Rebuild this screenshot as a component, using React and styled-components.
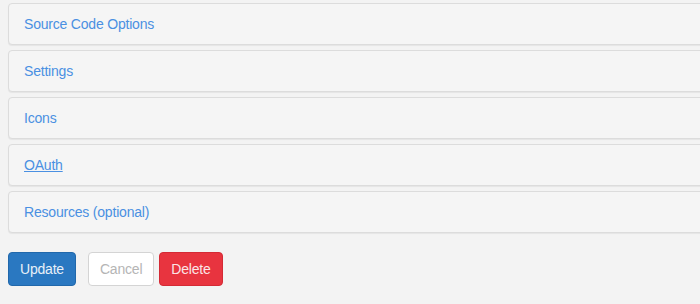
import React from "react";
import styled, { createGlobalStyle } from "styled-components";

const GlobalStyles = createGlobalStyle`
  html, body {
    margin: 0;
    padding: 0;
    overflow: hidden;
    background-color: #f3f3f3;
    font-family: "Liberation Sans", Arial, sans-serif;
    font-size: 14px;
  }
`;

const Page = styled.div`
  padding: 3px 0 0 8px;
`;

const PanelGroup = styled.div`
  display: flex;
  flex-direction: column;
  gap: 5px;
  width: 740px;
`;

const Panel = styled.div`
  background-color: #f5f5f5;
  border: 1px solid #dcdcdc;
  border-radius: 4px;
  box-shadow: 0 1px 1px rgba(0, 0, 0, 0.06);
`;

const PanelHeading = styled.div`
  padding: 10px 15px;
  line-height: 20px;
`;

const PanelLink = styled.a`
  color: #4a90e2;
  font-size: 14px;
  letter-spacing: -0.2px;
  text-decoration: ${(p) => (p.$active ? "underline" : "none")};
  cursor: pointer;
`;

const Actions = styled.div`
  display: flex;
  align-items: center;
  margin-top: 19px;
`;

const Button = styled.button`
  font-family: "Liberation Sans", Arial, sans-serif;
  font-size: 14px;
  letter-spacing: -0.2px;
  line-height: 20px;
  padding: 6px 11px;
  border-radius: 4px;
  border: 1px solid ${(p) => p.$border};
  background-color: ${(p) => p.$bg};
  color: ${(p) => p.$color};
  margin-right: ${(p) => p.$gap || 0}px;
  cursor: pointer;
`;

const sections = [
  { label: "Source Code Options" },
  { label: "Settings" },
  { label: "Icons" },
  { label: "OAuth", active: true },
  { label: "Resources (optional)" },
];

const App = () => {
  return (
    <Page>
      <GlobalStyles />
      <PanelGroup>
        {sections.map((s) => (
          <Panel key={s.label}>
            <PanelHeading>
              <PanelLink $active={s.active}>{s.label}</PanelLink>
            </PanelHeading>
          </Panel>
        ))}
      </PanelGroup>
      <Actions>
        <Button $bg="#2a78c1" $border="#2168ab" $color="#e8f0f8" $gap={12}>
          Update
        </Button>
        <Button $bg="#ffffff" $border="#d4d4d4" $color="#b5b5b5" $gap={5}>
          Cancel
        </Button>
        <Button $bg="#e8343f" $border="#d42a35" $color="#fbe4e6">
          Delete
        </Button>
      </Actions>
    </Page>
  );
};

export default App;
